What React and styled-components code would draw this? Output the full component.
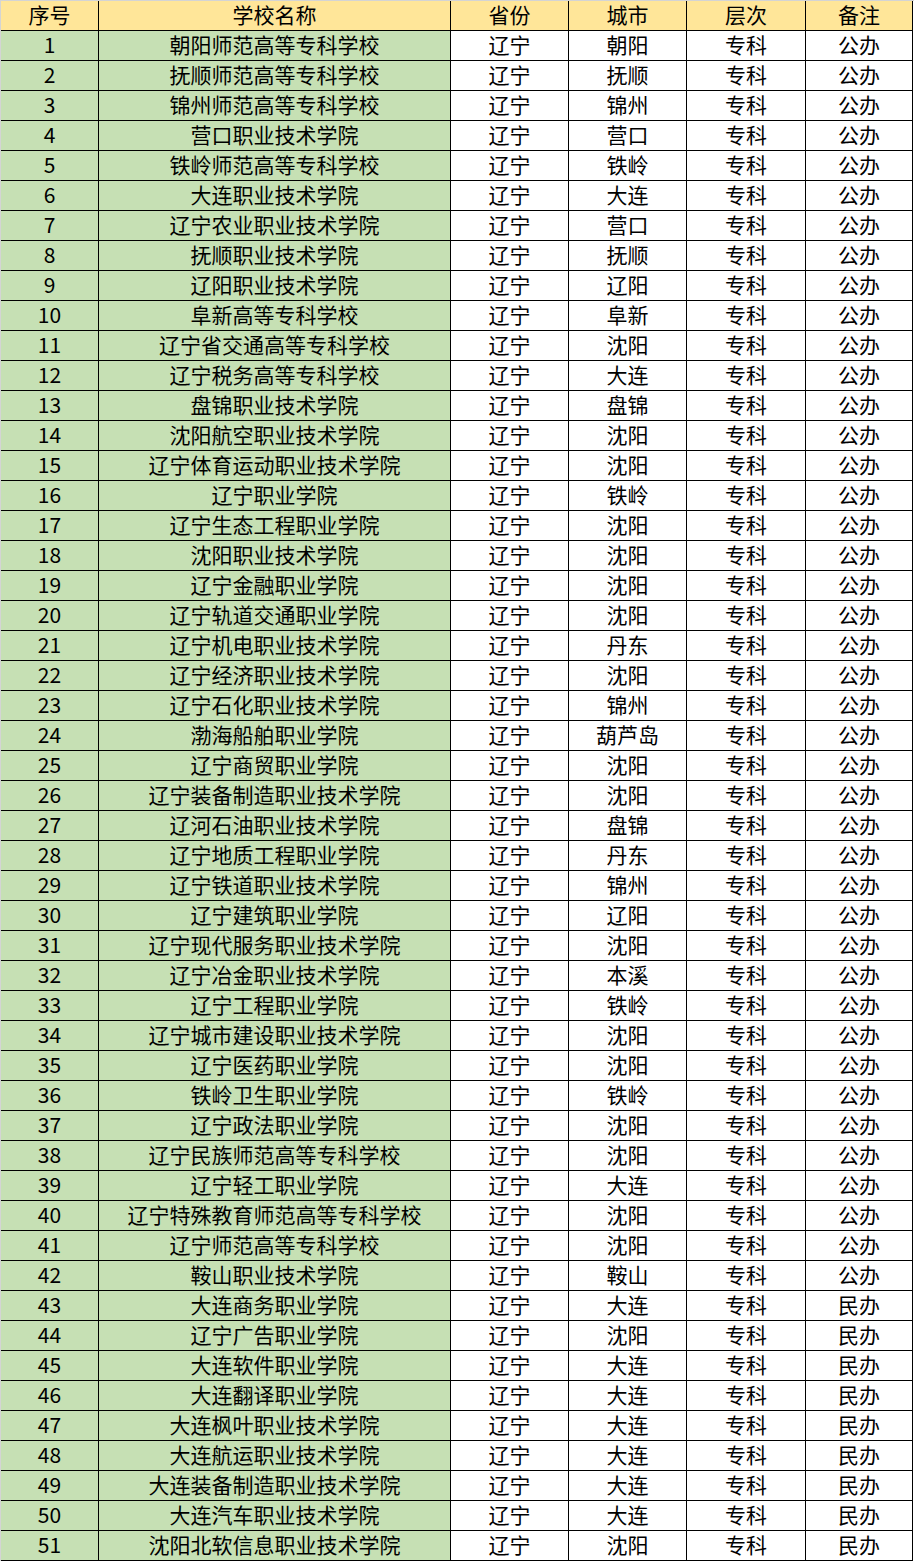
import React from "react";
import styled, { createGlobalStyle } from "styled-components";

const GlobalStyle = createGlobalStyle`
  html, body { margin: 0; padding: 0; background: #ffffff; }
  body { font-family: "Noto Sans CJK SC", "Noto Sans", sans-serif; }
`;

const Sheet = styled.div`
  width: 914px;
  box-sizing: border-box;
  border-top: 1px solid #d4d4d4;
  border-left: 1px solid #d4d4d4;
`;

const Grid = styled.div`
  display: grid;
  grid-template-columns: 98px 352px 118px 118px 119px 107px;
  grid-auto-rows: 30px;
`;

const Cell = styled.div`
  box-sizing: border-box;
  border-right: 1px solid #000;
  border-bottom: 1px solid #000;
  background: ${(p) => (p.$head ? "#ffe699" : p.$green ? "#c6e0b4" : "#ffffff")};
  display: flex;
  align-items: center;
  justify-content: center;
  font-family: "Noto Sans CJK SC", "Noto Sans", sans-serif;
  font-size: 21px;
  line-height: 1;
  color: #000;
  white-space: nowrap;
  padding-bottom: 3px;
`;

const rows = [
  ["朝阳师范高等专科学校", "朝阳"],
  ["抚顺师范高等专科学校", "抚顺"],
  ["锦州师范高等专科学校", "锦州"],
  ["营口职业技术学院", "营口"],
  ["铁岭师范高等专科学校", "铁岭"],
  ["大连职业技术学院", "大连"],
  ["辽宁农业职业技术学院", "营口"],
  ["抚顺职业技术学院", "抚顺"],
  ["辽阳职业技术学院", "辽阳"],
  ["阜新高等专科学校", "阜新"],
  ["辽宁省交通高等专科学校", "沈阳"],
  ["辽宁税务高等专科学校", "大连"],
  ["盘锦职业技术学院", "盘锦"],
  ["沈阳航空职业技术学院", "沈阳"],
  ["辽宁体育运动职业技术学院", "沈阳"],
  ["辽宁职业学院", "铁岭"],
  ["辽宁生态工程职业学院", "沈阳"],
  ["沈阳职业技术学院", "沈阳"],
  ["辽宁金融职业学院", "沈阳"],
  ["辽宁轨道交通职业学院", "沈阳"],
  ["辽宁机电职业技术学院", "丹东"],
  ["辽宁经济职业技术学院", "沈阳"],
  ["辽宁石化职业技术学院", "锦州"],
  ["渤海船舶职业学院", "葫芦岛"],
  ["辽宁商贸职业学院", "沈阳"],
  ["辽宁装备制造职业技术学院", "沈阳"],
  ["辽河石油职业技术学院", "盘锦"],
  ["辽宁地质工程职业学院", "丹东"],
  ["辽宁铁道职业技术学院", "锦州"],
  ["辽宁建筑职业学院", "辽阳"],
  ["辽宁现代服务职业技术学院", "沈阳"],
  ["辽宁冶金职业技术学院", "本溪"],
  ["辽宁工程职业学院", "铁岭"],
  ["辽宁城市建设职业技术学院", "沈阳"],
  ["辽宁医药职业学院", "沈阳"],
  ["铁岭卫生职业学院", "铁岭"],
  ["辽宁政法职业学院", "沈阳"],
  ["辽宁民族师范高等专科学校", "沈阳"],
  ["辽宁轻工职业学院", "大连"],
  ["辽宁特殊教育师范高等专科学校", "沈阳"],
  ["辽宁师范高等专科学校", "沈阳"],
  ["鞍山职业技术学院", "鞍山"],
  ["大连商务职业学院", "大连", "民办"],
  ["辽宁广告职业学院", "沈阳", "民办"],
  ["大连软件职业学院", "大连", "民办"],
  ["大连翻译职业学院", "大连", "民办"],
  ["大连枫叶职业技术学院", "大连", "民办"],
  ["大连航运职业技术学院", "大连", "民办"],
  ["大连装备制造职业技术学院", "大连", "民办"],
  ["大连汽车职业技术学院", "大连", "民办"],
  ["沈阳北软信息职业技术学院", "沈阳", "民办"],
];

const headers = ["序号", "学校名称", "省份", "城市", "层次", "备注"];

export default function App() {
  return (
    <>
      <GlobalStyle />
      <Sheet>
        <Grid>
          {headers.map((h) => (
            <Cell key={h} $head>
              {h}
            </Cell>
          ))}
          {rows.map(([name, city, type], i) => (
            <React.Fragment key={i}>
              <Cell $green>{i + 1}</Cell>
              <Cell $green>{name}</Cell>
              <Cell>辽宁</Cell>
              <Cell>{city}</Cell>
              <Cell>专科</Cell>
              <Cell>{type || "公办"}</Cell>
            </React.Fragment>
          ))}
        </Grid>
      </Sheet>
    </>
  );
}
